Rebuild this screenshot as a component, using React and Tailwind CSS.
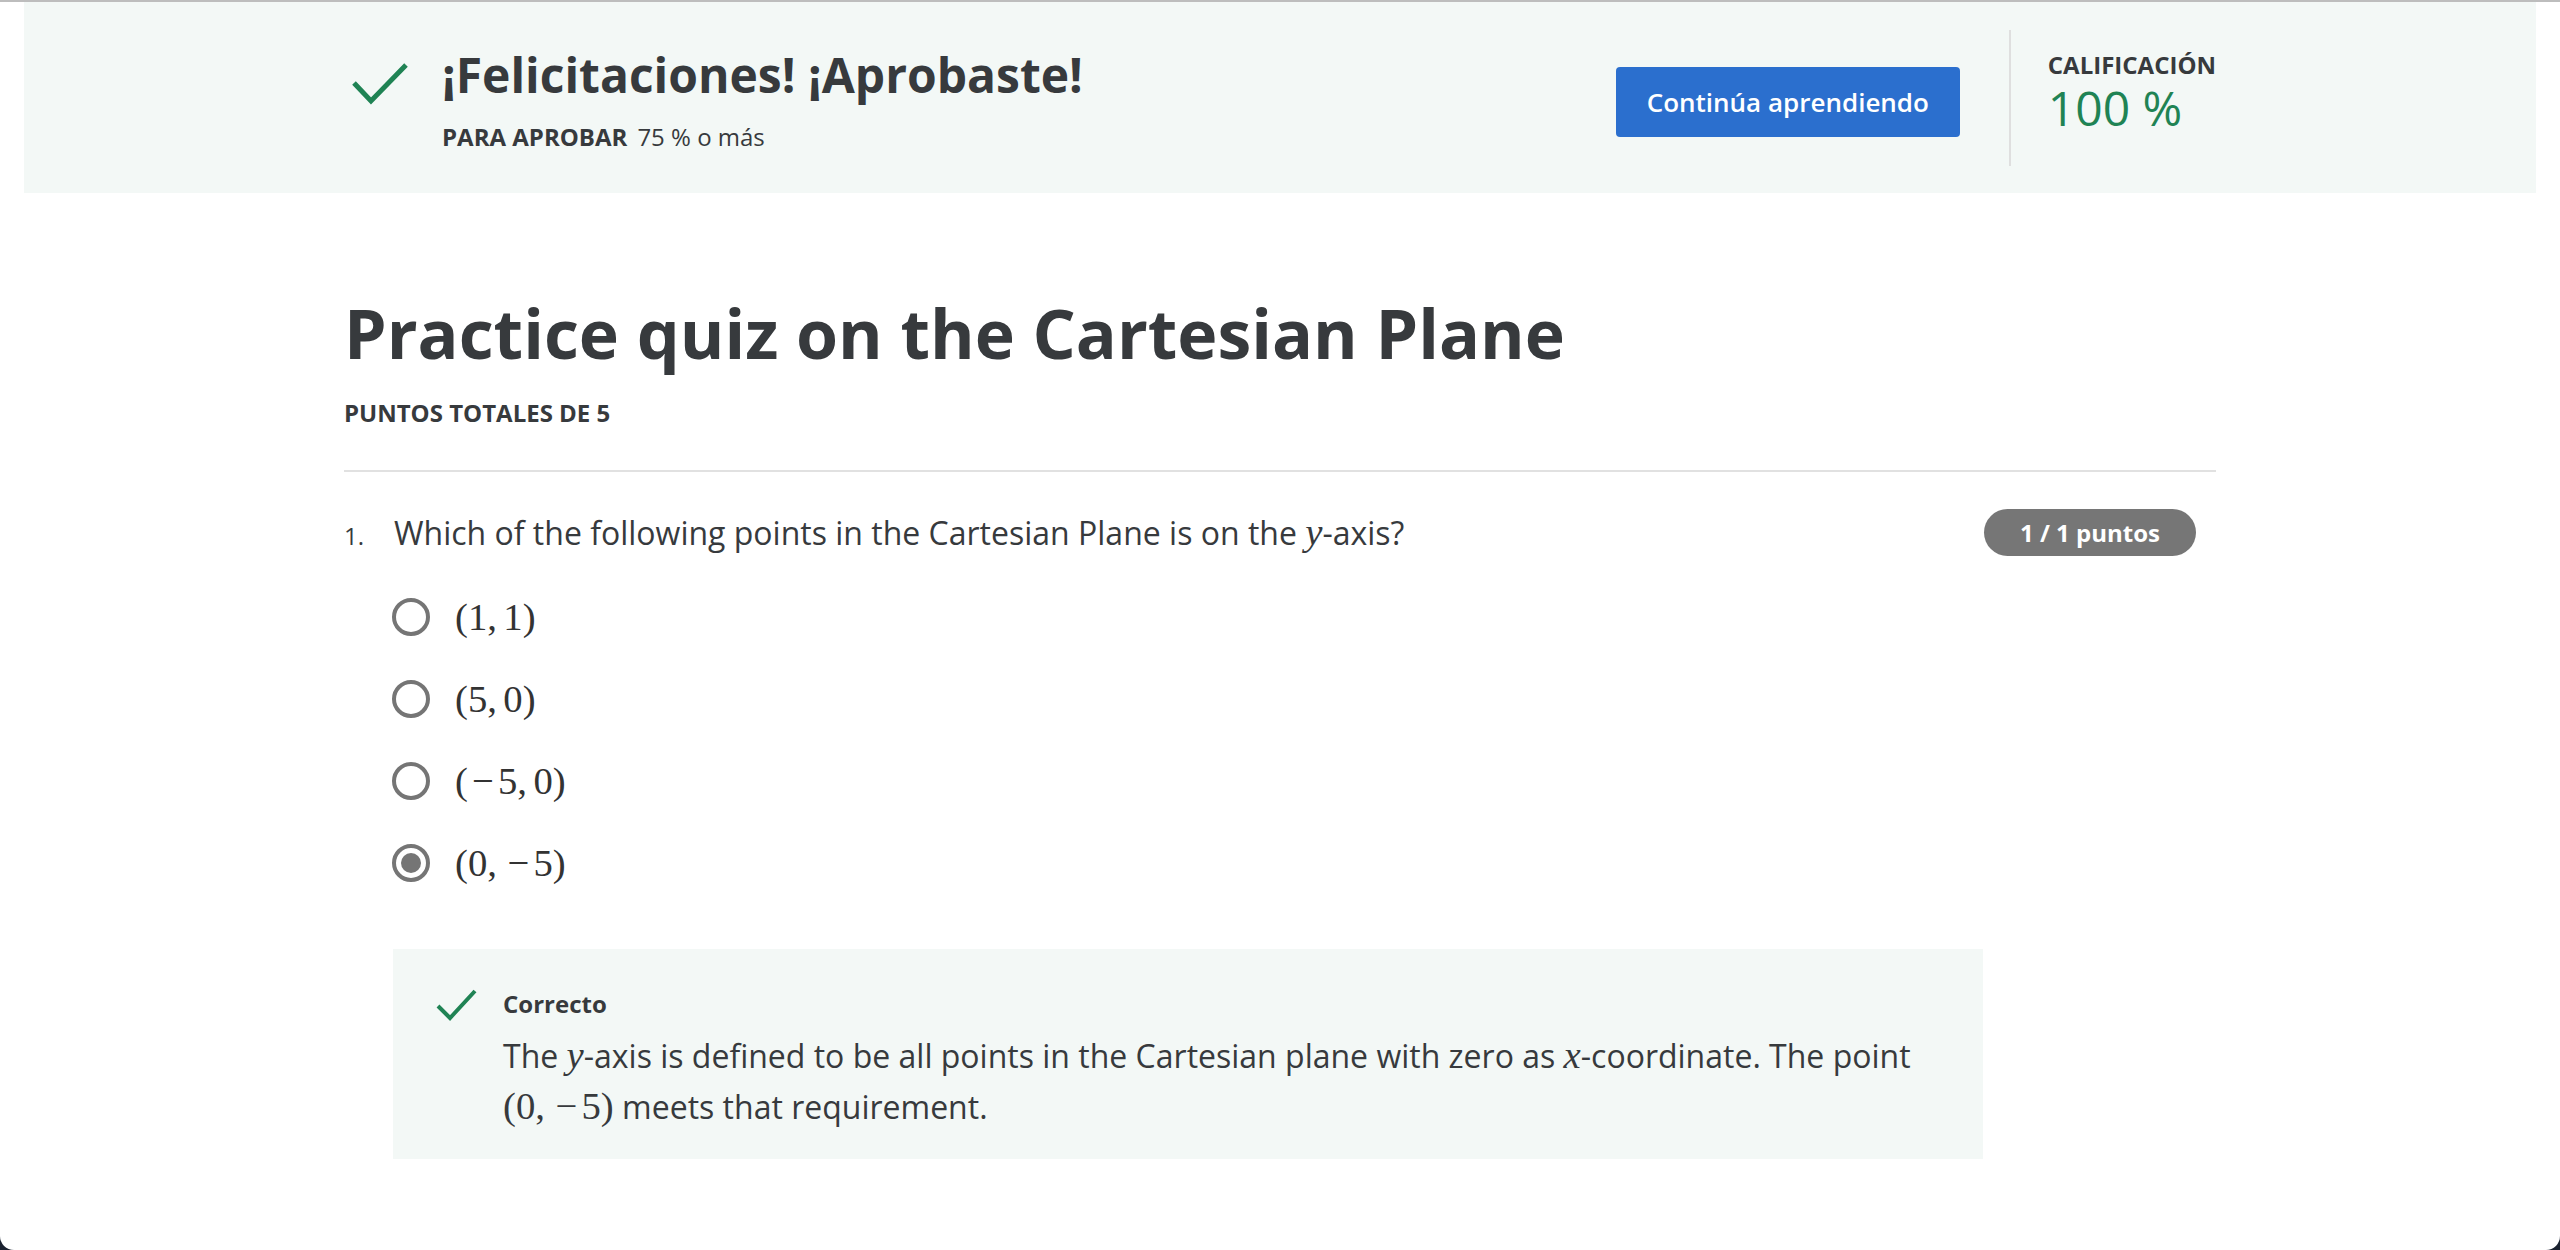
const Minus = () => <span className="inline-block w-[0.778em] text-center">{'\u2212'}</span>

const OPTIONS = [
  { key: 'a', label: <>(1,{'\u2006'}1)</>, selected: false },
  { key: 'b', label: <>(5,{'\u2006'}0)</>, selected: false },
  { key: 'c', label: <>(<Minus />5,{'\u2006'}0)</>, selected: false },
  { key: 'd', label: <>(0,{'\u2006'}<Minus />5)</>, selected: true },
]

function Math({ children, italic }) {
  return (
    <span className={`font-['Liberation_Serif',serif] text-[1.21em] ${italic ? 'italic' : ''}`}>
      {children}
    </span>
  )
}

function CheckMark({ w, h, points, sw, className }) {
  return (
    <svg width={w} height={h} viewBox={`0 0 ${w} ${h}`} className={className}>
      <polyline points={points} fill="none" stroke="#1f8354" strokeWidth={sw} />
    </svg>
  )
}

function Radio({ selected }) {
  return (
    <div className="w-[38px] h-[38px] rounded-full border-[4px] border-[#757575] flex items-center justify-center shrink-0">
      {selected && <div className="w-[20px] h-[20px] rounded-full bg-[#757575]" />}
    </div>
  )
}

export default function App() {
  return (
    <div className="h-[1250px] bg-[#1b2230]">
      <div className="h-[1250px] bg-white rounded-b-[14px] border-t-2 border-[#bdbdbd] font-['Open_Sans',sans-serif] text-[#373a3d]">
        {/* Result banner */}
        <div className="mx-[24px] h-[191px] bg-[#f3f8f6]">
          <div className="w-[1872px] mx-auto flex justify-between">
            <div className="flex pt-[44px]">
              <CheckMark w={56} h={44} points="2,21 19,39 54,3" sw={5} className="mt-[16px] ml-[8px] mr-[34px]" />
              <div>
                <h2 className="text-[48px] leading-[58px] font-bold">¡Felicitaciones! ¡Aprobaste!</h2>
                <div className="mt-[17px] text-[24px] leading-[32px]">
                  <span className="font-bold">PARA APROBAR</span>
                  <span className="ml-[10px]">75 % o más</span>
                </div>
              </div>
            </div>
            <div className="flex items-start pt-[28px]">
              <button className="mt-[37px] w-[344px] h-[70px] rounded-[4px] bg-[#2b6fce] text-white text-[26px] font-semibold">
                Continúa aprendiendo
              </button>
              <div className="ml-[49px] w-[2px] h-[136px] bg-[#dfdfdf]" />
              <div className="ml-[37px] mt-[19px]">
                <div className="text-[24px] leading-[32px] font-bold">CALIFICACIÓN</div>
                <div className="text-[48px] leading-[54px] text-[#1f8354]">100 %</div>
              </div>
            </div>
          </div>
        </div>

        {/* Quiz */}
        <div className="w-[1872px] mx-auto pt-[98px]">
          <h1 className="text-[68px] leading-[84px] font-bold">Practice quiz on the Cartesian Plane</h1>
          <div className="mt-[22px] text-[24px] leading-[32px] font-bold">PUNTOS TOTALES DE 5</div>
          <div className="mt-[41px] h-[2px] bg-[#e1e1e1]" />

          <div className="mt-[36px] flex items-center justify-between pr-[20px]">
            <div className="flex items-baseline">
              <span className="w-[50px] text-[24px]">1.</span>
              <span className="text-[32px] leading-[48px]">
                Which of the following points in the Cartesian Plane is on the <Math italic>y</Math>-axis?
              </span>
            </div>
            <div className="w-[212px] h-[47px] rounded-full bg-[#767676] text-white text-[24px] font-bold flex items-center justify-center">
              1 / 1 puntos
            </div>
          </div>

          <div className="mt-[19px] pl-[48px]">
            {OPTIONS.map(o => (
              <div key={o.key} className="h-[82px] flex items-center gap-[25px]">
                <Radio selected={o.selected} />
                <span className="font-['Liberation_Serif',serif] text-[38.7px] leading-[48px] text-[#333]">{o.label}</span>
              </div>
            ))}
          </div>

          <div className="ml-[49px] mt-[45px] w-[1590px] h-[210px] bg-[#f3f8f6] flex pl-[43px] pt-[39px]">
            <CheckMark w={41} h={32} points="2,17 14,29 39,2" sw={4} className="mt-[1px] mr-[26px] shrink-0" />
            <div className="pr-[48px]">
              <div className="text-[24px] leading-[32px] font-bold">Correcto</div>
              <p className="mt-[10px] text-[32px] leading-[50px]">
                The <Math italic>y</Math>-axis is defined to be all points in the Cartesian plane with zero as <Math italic>x</Math>-coordinate. The point <Math>(0,{'\u2006'}<Minus />5)</Math> meets that requirement.
              </p>
            </div>
          </div>
        </div>
      </div>
    </div>
  )
}
